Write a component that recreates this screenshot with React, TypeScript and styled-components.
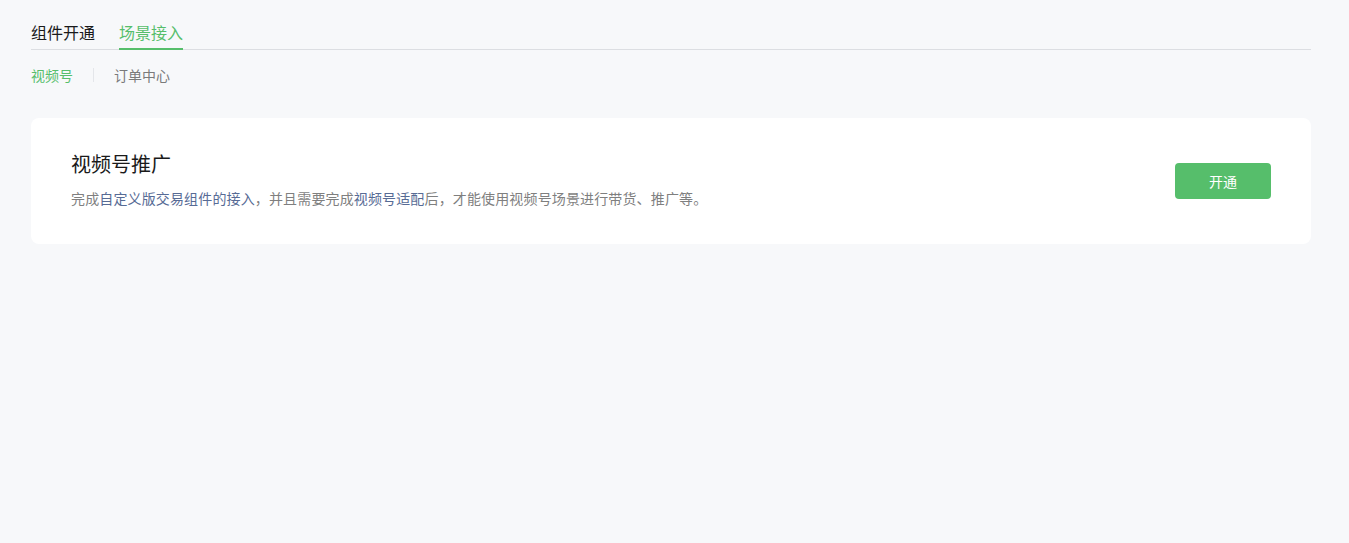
import React from "react";
import styled, { createGlobalStyle } from "styled-components";

const GlobalStyle = createGlobalStyle`
  html, body {
    margin: 0;
    padding: 0;
    background: #f7f8fa;
    font-family: "Noto Sans CJK SC", "Noto Sans", sans-serif;
  }
`;

const App = () => {
  return (
    <Page>
      <GlobalStyle />
      <Tabs>
        <Tab>组件开通</Tab>
        <Tab active>场景接入</Tab>
      </Tabs>
      <SubNav>
        <SubItem active>视频号</SubItem>
        <Divider />
        <SubItem>订单中心</SubItem>
      </SubNav>
      <Card>
        <CardBody>
          <Title>视频号推广</Title>
          <Description>
            完成<Link>自定义版交易组件的接入</Link>，并且需要完成
            <Link>视频号适配</Link>后，才能使用视频号场景进行带货、推广等。
          </Description>
        </CardBody>
        <Button>开通</Button>
      </Card>
    </Page>
  );
};

export default App;

// ****  STYLED COMPONENTS  ****

const Page = styled.div`
  width: 1311px;
  padding: 16px 0 0 31px;
  min-height: 543px;
  box-sizing: border-box;
`;

const Tabs = styled.div`
  display: flex;
  gap: 24px;
  border-bottom: 1px solid #dcdee2;
`;

const Tab = styled.div<{ active?: boolean }>`
  font-size: 16px;
  line-height: 32px;
  color: ${(p) => (p.active ? "#56be6b" : "#1a1a1a")};
  border-bottom: 2px solid ${(p) => (p.active ? "#56be6b" : "transparent")};
  margin-bottom: -1px;
`;

const SubNav = styled.div`
  display: flex;
  align-items: center;
  height: 50px;
  margin-bottom: 18px;
`;

const SubItem = styled.div<{ active?: boolean }>`
  font-size: 14px;
  color: ${(p) => (p.active ? "#56be6b" : "#7a7a7a")};
`;

const Divider = styled.span`
  width: 1px;
  height: 14px;
  background: #e4e6ea;
  margin: 0 20px;
`;

const Card = styled.div`
  display: flex;
  align-items: center;
  justify-content: space-between;
  background: #fff;
  border-radius: 8px;
  height: 126px;
  padding: 0 40px;
  box-sizing: border-box;
`;

const CardBody = styled.div`
  display: flex;
  flex-direction: column;
  padding-bottom: 4px;
`;

const Title = styled.div`
  font-size: 20px;
  line-height: 28px;
  color: #1a1a1a;
`;

const Description = styled.div`
  font-size: 14px;
  line-height: 20px;
  color: #7f7f7f;
  margin-top: 10px;
  letter-spacing: 0.14px;
`;

const Link = styled.span`
  color: #576b95;
`;

const Button = styled.button`
  width: 96px;
  height: 36px;
  border: none;
  border-radius: 4px;
  background: #56be6b;
  color: #fff;
  font-family: inherit;
  font-size: 14px;
  cursor: pointer;
`;
